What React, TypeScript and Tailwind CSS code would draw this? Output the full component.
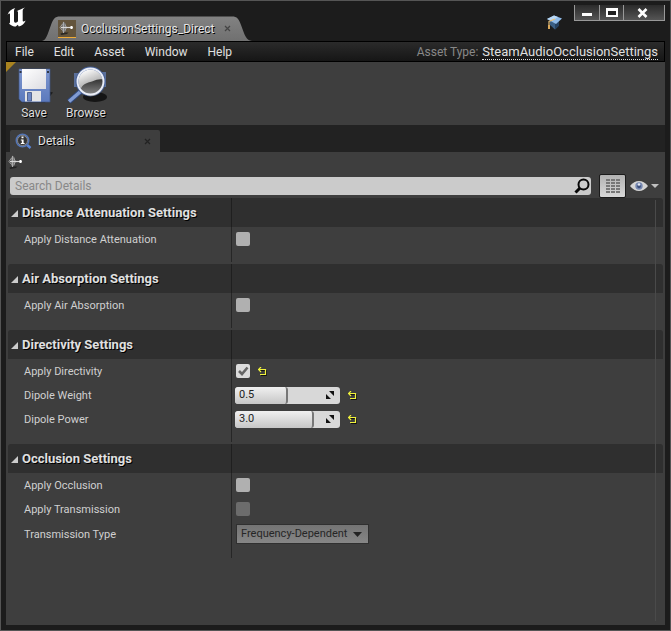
import React, { useState } from "react";

const textShadow = "[text-shadow:1px_1px_0_#000]";

function UnrealLogo() {
  return (
    <svg width="20" height="22" viewBox="0 0 20 22" fill="#fff" aria-hidden="true">
      <path d="M.5 8C1.500 4.500 4.500 1.800 8.300 1 7.300 2 7 2.800 7 4V13.800C7 15 7.600 15.700 8.600 15.700 9.600 15.700 10.500 15 11 14.300V5.300C11 4.300 10.600 4 9.700 4.200 12 3.300 14.400 2 18 .6 16 2 15.700 2.800 15.700 4.200V13.500C15.700 14.700 16.500 14.900 18.700 13.400 17.300 16.600 15 18.700 11.800 19.500L10.800 17.800 8.800 19.600C5.300 19.400 2.500 17.500 2 16.200 2.700 16.300 3 15.900 3 15V7.400C3 6.200 2 6.200 .5 8Z" />
    </svg>
  );
}

function AssetGlyph() {
  return (
    <svg width="16" height="16" viewBox="0 0 16 16" fill="none" aria-hidden="true">
      <path d="M1.500 13.500l4-1h4l-1.500 1.500-6 1z" fill="#1c1c1c" opacity=".8" />
      <path d="M4.500 1.500L7 4v7l-2.500 2-1.500-2V4z" fill="#777" />
      <path d="M4.500 2v11" stroke="#aaa" />
      <path d="M3.500 4L1 7.500l2.500 3M6 4.500l1.500 3-1.500 3" stroke="#a0a0a0" />
      <path d="M2 7.500h12" stroke="#d8d8d8" strokeWidth="1.200" />
      <path d="M11.500 6h2v3h-2z" fill="#fff" />
    </svg>
  );
}

function TutorialIcon() {
  return (
    <svg width="17" height="17" viewBox="0 0 17 17" aria-hidden="true">
      <path d="M4 6v5l5 4.500 4-4V6z" fill="#3a5f85" />
      <path d="M9 9v6.500l4-4V6z" fill="#24405f" />
      <path d="M1 5l7-3.500L16 4.500 10 10z" fill="#8fbbe9" />
      <path d="M1 5l7-3.500 4 1.500-6 4z" fill="#b8d7f4" />
      <path d="M9 5L3 7.500V12" stroke="#e2bd79" strokeWidth="1.200" fill="none" />
      <path d="M2 11h2v4H2z" fill="#dba95b" />
    </svg>
  );
}

function SaveIcon() {
  return (
    <svg width="40" height="40" viewBox="0 0 40 40" aria-hidden="true">
      <defs>
        <linearGradient id="disk" x1="0" y1="0" x2="0" y2="1"><stop stopColor="#8098cf" /><stop offset="1" stopColor="#5b79bd" /></linearGradient>
        <linearGradient id="sheet" x1="0" y1="0" x2="1" y2="1"><stop stopColor="#fff" /><stop offset="1" stopColor="#dcdce1" /></linearGradient>
      </defs>
      <path d="M7 36.500h24l8-10-4-1-4 5z" fill="#1e1e1e" />
      <path d="M5 3h31v33H8l-3-3z" fill="url(#disk)" stroke="#405786" strokeWidth=".7" />
      <path d="M8 3h24v20H8z" fill="url(#sheet)" />
      <path d="M11 25h16v10.500H11z" fill="#e4e4e6" />
      <path d="M13.500 26.500h4V35h-4z" fill="#6d87c4" stroke="#3c5080" strokeWidth=".8" />
      <path d="M5.500 5h2v2h-2zM33 5h2v2h-2z" fill="#303746" />
    </svg>
  );
}

function BrowseIcon() {
  return (
    <svg width="42" height="40" viewBox="0 0 42 40" aria-hidden="true">
      <defs>
        <linearGradient id="lens" x1="0" y1="0" x2=".4" y2="1"><stop offset=".15" stopColor="#fff" /><stop offset="1" stopColor="#858585" /></linearGradient>
        <linearGradient id="lensDark" x1="0" y1="0" x2="0" y2="1"><stop stopColor="#343434" /><stop offset="1" stopColor="#8c8c8c" /></linearGradient>
      </defs>
      <ellipse cx="30" cy="31" rx="12" ry="5" fill="#151515" />
      <path d="M9 7h8v14H9zM36 6h5v15h-5z" fill="#5a6f9a" />
      <path d="M15.500 25.500L4 35.500" stroke="#2f4779" strokeWidth="5.500" />
      <path d="M15.500 25.500L4 35.500" stroke="#809bd3" strokeWidth="3.500" />
      <circle cx="25.500" cy="15.500" r="13.500" fill="url(#lens)" stroke="#435d94" strokeWidth="3" />
      <path d="M15.500 24C17 18 22 17 27 15.500 32 13.500 34 13 38 13.500A12.500 12.500 0 0 1 15.500 24Z" fill="url(#lensDark)" />
      <circle cx="25.500" cy="15.500" r="13" fill="none" stroke="#e9edf7" strokeWidth="2" />
    </svg>
  );
}

function InfoIcon() {
  return (
    <svg width="17" height="17" viewBox="0 0 17 17" aria-hidden="true">
      <path d="M11 11l4.500 4" stroke="#5c86d6" strokeWidth="2.500" />
      <circle cx="7.500" cy="7.500" r="6.200" fill="#333" stroke="#5475b4" strokeWidth="1.600" />
      <circle cx="7.500" cy="7.500" r="5" fill="none" stroke="#aaa" strokeWidth=".7" />
      <path d="M6.500 3.500h2v1.800h-2zM5.800 6.500h2.800V10h1v1H5.800v-1h1V7.500h-1z" fill="#fff" />
    </svg>
  );
}

function CloseGlyph() {
  return (
    <svg width="7" height="7" viewBox="0 0 7 7" aria-hidden="true">
      <path d="M1 1l5 5M6 1L1 6" stroke="currentColor" strokeWidth="1.200" />
    </svg>
  );
}

function TitleBar() {
  return (
    <header className="flex h-10 items-start justify-between">
      <div className="flex h-full">
        <div className="w-9 pt-[6px] pl-px"><UnrealLogo /></div>
        <div className="relative mt-[15px] flex h-[25px] w-[210px] items-center pl-4">
          <svg className="absolute inset-0 h-full w-full" viewBox="0 0 210 25" preserveAspectRatio="none" aria-hidden="true">
            <defs><linearGradient id="tab" x1="0" y1="0" x2="0" y2="1"><stop stopColor="#828282" /><stop offset="1" stopColor="#707070" /></linearGradient></defs>
            <path d="M0 25C4 24 5 20 9 9 11 3 13 .5 18 .5H190C195 .5 197 3 199 9 203 20 204 24 210 25Z" fill="url(#tab)" />
          </svg>
          <span className="relative flex h-[18px] w-[18px] items-center justify-center border-b border-[#f0ac36] bg-[#63543c]"><AssetGlyph /></span>
          <span className={`relative ml-[5px] text-xs text-[#e4e4e4] ${textShadow}`}>OcclusionSettings_Direct</span>
          <button aria-label="Close tab" className="relative ml-[10px] text-[#444]"><CloseGlyph /></button>
        </div>
      </div>
      <div className="flex">
        <button aria-label="Tutorials" className="mt-[13px] mr-[11px]"><TutorialIcon /></button>
        <div className="mt-1 flex h-4 divide-x divide-[#999] border border-t-0 border-[#999] bg-linear-to-b from-[#2b2b2b] to-[#555]">
          <button aria-label="Minimize" className="flex w-[25px] items-end justify-center pb-1"><span className="h-[3px] w-[10px] bg-white" /></button>
          <button aria-label="Maximize" className="flex w-6 items-center justify-center"><span className="h-[9px] w-3 border-2 border-t-3 border-white bg-[#222]" /></button>
          <button aria-label="Close" className="flex w-10 items-center justify-center pr-1">
            <svg width="11" height="10" viewBox="0 0 11 10" aria-hidden="true"><path d="M1.500 1l8 8M9.500 1l-8 8" stroke="#fff" strokeWidth="2.600" /></svg>
          </button>
        </div>
      </div>
    </header>
  );
}

function MenuBar() {
  return (
    <nav className="flex h-[21px] items-center justify-between border border-black bg-linear-to-b from-[#2b2b2b] to-[#161616] pr-[6px] pl-2 text-xs text-[#e0e0e0]">
      <div className="flex gap-5">
        <button>File</button>
        <button>Edit</button>
        <button>Asset</button>
        <button>Window</button>
        <button>Help</button>
      </div>
      <div className="flex items-center gap-1">
        <span className="text-[#888]">Asset Type:</span>
        <a href="#asset-type" className="h-4 border-b border-dotted border-[#ddd] text-[13px] leading-4">SteamAudioOcclusionSettings</a>
      </div>
    </nav>
  );
}

function Toolbar() {
  return (
    <div className="relative flex h-[63px] gap-2 bg-[#3e3e3e] pl-2">
      <span className="absolute top-0 left-0 h-[10px] w-[10px] bg-[#a98320] [clip-path:polygon(0_0,100%_0,0_100%)]" />
      <button className="flex w-10 flex-col items-center pt-1">
        <SaveIcon />
        <span className={`text-xs leading-[14px] text-[#ddd] ${textShadow}`}>Save</span>
      </button>
      <button className="flex w-12 flex-col items-center pt-1">
        <BrowseIcon />
        <span className={`text-xs leading-[14px] text-[#ddd] ${textShadow}`}>Browse</span>
      </button>
    </div>
  );
}

function SearchRow() {
  return (
    <div className="flex h-6 items-center pr-[6px] pl-1">
      <label className="flex h-[18px] flex-1 items-center rounded-[3px] bg-[#cbcbcb] pr-px pl-[5px]">
        <input type="text" aria-label="Search Details" placeholder="Search Details" className="min-w-0 flex-1 bg-transparent text-xs text-[#222] outline-none placeholder:text-[#888]" />
        <svg width="16" height="16" viewBox="0 0 16 16" fill="none" stroke="#080808" aria-hidden="true">
          <circle cx="9.500" cy="6.500" r="5" strokeWidth="2" />
          <path d="M6 10l-4.500 4.500" strokeWidth="3" />
        </svg>
      </label>
      <button aria-label="Property matrix" className="ml-2 flex h-6 w-[27px] items-center justify-center rounded-[2px] border border-[#1b1b1b] bg-linear-to-b from-[#b2b2b2] to-[#d8d8d8]">
        <svg width="14" height="15" viewBox="0 0 14 15" fill="#777" aria-hidden="true">
          <path d="M0 0h4v2H0zM5 0h4v2H5zM10 0h4v2h-4zM0 3h4v2H0zM5 3h4v2H5zM10 3h4v2h-4zM0 6h4v2H0zM5 6h4v2H5zM10 6h4v2h-4zM0 9h4v2H0zM5 9h4v2H5zM10 9h4v2h-4zM0 12h4v2H0zM5 12h4v2H5zM10 12h4v2h-4z" />
        </svg>
      </button>
      <button aria-label="View options" className="ml-1 flex items-center gap-[3px]">
        <svg width="18" height="12" viewBox="0 0 18 12" aria-hidden="true">
          <path d="M0 6Q4 1 9 1T18 6Q14 11 9 11T0 6Z" fill="#d4d4d4" />
          <circle cx="9" cy="6" r="3.700" fill="#7587b0" />
          <circle cx="9" cy="6.500" r="1.800" fill="#3c4f7a" />
          <circle cx="9" cy="4.500" r="1.200" fill="#e4e9f3" />
        </svg>
        <svg width="8" height="4" viewBox="0 0 8 4" fill="#c0c0c0" aria-hidden="true"><path d="M0 0h8L4 4z" /></svg>
      </button>
    </div>
  );
}

function Category({ title, children }: { title: string; children: React.ReactNode }) {
  return (
    <section className="mb-[2px]">
      <h2 className="flex h-[29px] rounded-t-[3px] bg-[#2f2f2f]">
        <button className={`flex w-[224px] items-center gap-1 border-r border-[#1f1f1f] pl-[3px] text-left text-[13px] font-bold text-[#e0e0e0] ${textShadow}`}>
          <svg className="mt-[2px]" width="7" height="7" viewBox="0 0 7 7" fill="#ccc" aria-hidden="true"><path d="M7 0v7H0z" /></svg>
          {title}
        </button>
      </h2>
      <div className="relative pb-[11px]">
        <span className="absolute inset-y-0 left-[223px] w-px bg-[#262626]" />
        {children}
      </div>
    </section>
  );
}

function Row({ id, label, children }: { id: string; label: string; children: React.ReactNode }) {
  return (
    <div className="flex h-6 items-center">
      <label htmlFor={id} className="w-[227px] pt-[2px] pl-4 text-[11px] text-[#d0d0d0]">{label}</label>
      {children}
    </div>
  );
}

function Reset() {
  return (
    <button aria-label="Reset to default" className="ml-2">
      <svg width="9" height="9" viewBox="0 0 9 9" fill="none" aria-hidden="true">
        <path d="M2 3.500h6.500v5H3" stroke="#111" />
        <path d="M0 2.500h7.500v5H2" stroke="#f0f23c" strokeWidth="1.200" />
        <path d="M3 0L.5 2.500 3 5" stroke="#f0f23c" strokeWidth="1.200" />
      </svg>
    </button>
  );
}

function Check({ id, on = false, disabled = false }: { id: string; on?: boolean; disabled?: boolean }) {
  const [checked, setChecked] = useState(on);
  return (
    <span className="relative ml-px h-[14px] w-[14px]">
      <input
        id={id}
        type="checkbox"
        checked={checked}
        disabled={disabled}
        onChange={(e) => setChecked(e.target.checked)}
        className="block h-[14px] w-[14px] appearance-none rounded-[2px] bg-[#b0b0b0] checked:bg-[#dcdcdc] disabled:bg-[#6c6c6c]"
      />
      {checked && (
        <svg className="pointer-events-none absolute inset-0" width="14" height="14" viewBox="0 0 14 14" fill="none" aria-hidden="true">
          <path d="M3 7l3 3L11.500 3.500" stroke="#666" strokeWidth="2.600" />
        </svg>
      )}
    </span>
  );
}

function Spin({ id, value, max }: { id: string; value: string; max: number }) {
  const [text, setText] = useState(value);
  const fill = Math.min(100, (Number(text) / max) * 100 || 0);
  return (
    <span className="relative flex h-[17px] w-[105px] items-center overflow-hidden rounded-[3px] bg-[#d8d8d8]">
      <span className="absolute inset-y-0 left-0 rounded-[3px] border-r-2 border-[#777] bg-linear-to-b from-[#f0f0f0] to-[#c6c6c6]" style={{ width: `${fill}%` }} />
      <input id={id} type="text" value={text} onChange={(e) => setText(e.target.value)} className="relative w-full bg-transparent pt-px pl-1 text-[11px] text-[#222] outline-none" />
      <svg className="absolute right-[6px]" width="8" height="8" viewBox="0 0 8 8" fill="#111" aria-hidden="true"><path d="M3 0H8v5zM0 3V8h5z" /></svg>
    </span>
  );
}

export default function App() {
  return (
    <div className="flex min-h-screen flex-col border border-[#555] bg-[#1c1c1c] px-[5px] pb-[5px] font-[Roboto,'Liberation_Sans',sans-serif]">
      <TitleBar />
      <MenuBar />
      <Toolbar />
      <div className="flex h-[27px] items-end bg-[#222] pl-1">
        <div className="flex h-[22px] w-[150px] items-center rounded-t-[2px] bg-[#3e3e3e] pr-[9px] pl-[5px]">
          <InfoIcon />
          <span className={`ml-[6px] flex-1 text-xs text-[#e0e0e0] ${textShadow}`}>Details</span>
          <button aria-label="Close Details" className="text-[#222]"><CloseGlyph /></button>
        </div>
      </div>
      <main className="flex flex-1 flex-col bg-[#3e3e3e]">
        <div className="h-[22px] pt-[2px] pl-[2px]"><AssetGlyph /></div>
        <SearchRow />
        <div className="relative flex-1 px-[2px]">
          <span className="absolute top-[2px] right-[9px] bottom-1 w-px bg-[#4a4a4a]" />
          <Category title="Distance Attenuation Settings">
            <Row id="distance" label="Apply Distance Attenuation"><Check id="distance" /></Row>
          </Category>
          <Category title="Air Absorption Settings">
            <Row id="air" label="Apply Air Absorption"><Check id="air" /></Row>
          </Category>
          <Category title="Directivity Settings">
            <Row id="directivity" label="Apply Directivity"><Check id="directivity" on /><Reset /></Row>
            <Row id="weight" label="Dipole Weight"><Spin id="weight" value="0.5" max={1} /><Reset /></Row>
            <Row id="power" label="Dipole Power"><Spin id="power" value="3.0" max={4} /><Reset /></Row>
          </Category>
          <Category title="Occlusion Settings">
            <Row id="occlusion" label="Apply Occlusion"><Check id="occlusion" /></Row>
            <Row id="transmission" label="Apply Transmission"><Check id="transmission" disabled /></Row>
            <div className="pt-px pb-px">
              <Row id="type" label="Transmission Type">
                <span className="relative ml-px">
                  <select id="type" disabled className="block h-5 w-[133px] appearance-none border border-[#303030] bg-linear-to-b from-[#747474] to-[#868686] pl-1 text-[11px] text-[#262626] opacity-100">
                    <option>Frequency-Dependent</option>
                  </select>
                  <svg className="pointer-events-none absolute top-2 right-[7px]" width="9" height="5" viewBox="0 0 9 5" fill="#222" aria-hidden="true"><path d="M0 0h9L4.500 5z" /></svg>
                </span>
              </Row>
            </div>
          </Category>
        </div>
      </main>
    </div>
  );
}
